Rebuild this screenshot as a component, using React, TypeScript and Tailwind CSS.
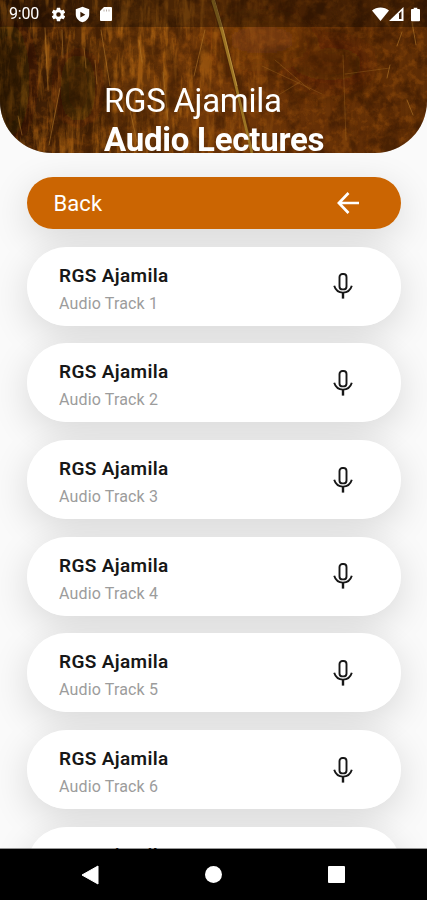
import React from "react";

const tracks = [1, 2, 3, 4, 5, 6, 7];

const WoodTexture: React.FC = () => (
  <svg
    className="absolute inset-0 h-full w-full"
    viewBox="0 0 427 153"
    preserveAspectRatio="none"
    aria-hidden="true"
  >
    <defs>
      <linearGradient id="base" x1="0" y1="0" x2="1" y2="0">
        <stop offset="0" stopColor="#3a1c05" />
        <stop offset="0.12" stopColor="#482306" />
        <stop offset="0.3" stopColor="#663508" />
        <stop offset="0.5" stopColor="#703708" />
        <stop offset="0.75" stopColor="#642f06" />
        <stop offset="1" stopColor="#5c2c05" />
      </linearGradient>
      <linearGradient id="fadeRight" x1="0" y1="0" x2="1" y2="0">
        <stop offset="0.4" stopColor="#fff" />
        <stop offset="0.7" stopColor="#222" />
      </linearGradient>
      <mask id="leftMask">
        <rect width="427" height="153" fill="url(#fadeRight)" />
      </mask>
      <filter id="grain" x="0" y="0" width="100%" height="100%" colorInterpolationFilters="sRGB">
        <feTurbulence type="fractalNoise" baseFrequency="0.16 0.025" numOctaves={5} seed={8} />
        <feColorMatrix values="0 0 0 0 0.7  0 0 0 0 0.41  0 0 0 0 0.08  4 0 0 0 -1.85" />
      </filter>
      <filter id="blotch" x="0" y="0" width="100%" height="100%" colorInterpolationFilters="sRGB">
        <feTurbulence type="fractalNoise" baseFrequency="0.06 0.045" numOctaves={6} seed={21} />
        <feColorMatrix values="0 0 0 0 0.14  0 0 0 0 0.05  0 0 0 0 0  0 4 0 0 -1.8" />
      </filter>
      <filter id="rust" x="0" y="0" width="100%" height="100%" colorInterpolationFilters="sRGB">
        <feTurbulence type="fractalNoise" baseFrequency="0.12 0.13" numOctaves={4} seed={4} />
        <feColorMatrix values="0 0 0 0 0.65  0 0 0 0 0.35  0 0 0 0 0.06  4 0 0 0 -1.85" />
      </filter>
      <filter id="soft">
        <feGaussianBlur stdDeviation="0.6" />
      </filter>
      <filter id="smudge" x="-50%" y="-50%" width="200%" height="200%">
        <feGaussianBlur stdDeviation="12" />
      </filter>
    </defs>
    <rect width="427" height="153" fill="url(#base)" />
    <g mask="url(#leftMask)">
      <rect width="427" height="153" filter="url(#grain)" opacity="0.7" />
    </g>
    <rect width="427" height="153" filter="url(#rust)" opacity="0.35" />
    <rect width="427" height="153" filter="url(#blotch)" opacity="0.4" />
    <g filter="url(#smudge)">
      <ellipse cx="78" cy="88" rx="18" ry="38" fill="#1c0b02" opacity="0.6" />
      <ellipse cx="8" cy="80" rx="22" ry="60" fill="#1c0b02" opacity="0.6" />
      <ellipse cx="330" cy="64" rx="36" ry="16" fill="#3a1803" opacity="0.6" />
      <ellipse cx="262" cy="40" rx="40" ry="14" fill="#8a450d" opacity="0.5" />
    </g>
    <g fill="none" stroke="#b47a2b" strokeLinecap="round" filter="url(#soft)">
      <path d="M45 28L48 90M62 30L63 58M60 88L49 145M101 30L110 86M139 40L142 62M205 30L194 76" opacity="0.55" />
      <path d="M18 116L22 135M84 48L86 68M163 72L168 120M130 110L137 142M95 60L97 84" opacity="0.5" />
      <path d="M262 66L322 94M275 60L310 90M300 82L270 100M345 74L390 68M343 55L346 140" opacity="0.3" />
      <path d="M412 22L416 45M397 46L402 32M390 65L387 78M407 100L413 115" opacity="0.6" />
    </g>
    <path d="M213 0L222 31L237 90L254 153" fill="none" stroke="#4a2405" strokeWidth="5" opacity="0.5" />
    <path d="M212.5 0L222 31L236 86L252 153" fill="none" stroke="#9c7423" strokeWidth="2.8" />
    <path d="M214.5 0L223.5 31L237 86" fill="none" stroke="#c49b48" strokeWidth="0.8" />
  </svg>
);

const StatusBar: React.FC = () => (
  <div className="absolute inset-x-0 top-0 flex h-[27px] items-center bg-black/30 pt-[1px] pr-[7px] pl-[9px] text-white">
    <span className="w-[41px] text-[16px] leading-none tracking-[-0.2px]">9:00</span>
    <svg className="h-[17px] w-[17px]" viewBox="0 0 24 24" fill="currentColor">
      <path d="M19.14 12.94c.04-.3.06-.61.06-.94 0-.32-.02-.64-.07-.94l2.03-1.58c.18-.14.23-.41.12-.61l-1.92-3.32c-.12-.22-.37-.29-.59-.22l-2.39.96c-.5-.38-1.03-.7-1.62-.94l-.36-2.54c-.04-.24-.24-.41-.48-.41h-3.84c-.24 0-.43.17-.47.41l-.36 2.54c-.59.24-1.13.57-1.62.94l-2.39-.96c-.22-.08-.47 0-.59.22L2.74 8.87c-.12.21-.08.47.12.61l2.03 1.58c-.05.3-.09.63-.09.94s.02.64.07.94l-2.03 1.58c-.18.14-.23.41-.12.61l1.92 3.32c.12.22.37.29.59.22l2.39-.96c.5.38 1.03.7 1.62.94l.36 2.54c.05.24.24.41.48.41h3.84c.24 0 .44-.17.47-.41l.36-2.54c.59-.24 1.13-.56 1.62-.94l2.39.96c.22.08.47 0 .59-.22l1.92-3.32c.12-.22.07-.47-.12-.61l-2.01-1.58zM12 15.2A3.2 3.2 0 1 1 12 8.8a3.2 3.2 0 0 1 0 6.4z" />
    </svg>
    <svg className="ml-[7px] h-[17px] w-[17px]" viewBox="0 0 24 24" fill="currentColor">
      <path fillRule="evenodd" d="M12 1L2.5 4.5v7c0 5.3 4 9.8 9.5 11.5 5.5-1.7 9.5-6.2 9.5-11.5v-7L12 1zM9 8l7 4.2-7 4.2V8z" />
    </svg>
    <svg className="ml-[8px] h-[16px] w-[14px]" viewBox="0 0 14 16" fill="currentColor">
      <path d="M5 1h7a1 1 0 0 1 1 1v12a1 1 0 0 1-1 1H2a1 1 0 0 1-1-1V5l4-4z" />
      <path d="M5 3.5v2M7.5 3.5v2M10 3.5v2" stroke="#3b1e08" strokeWidth="0.7" opacity="0.5" />
    </svg>
    <svg className="ml-auto h-[14px] w-[17px]" viewBox="0 0 17 14" fill="currentColor">
      <path d="M8.5 14L0 3.5C4.5-.5 12.5-.5 17 3.5L8.5 14z" />
    </svg>
    <svg className="h-[14px] w-[15px]" viewBox="0 0 15 14">
      <path d="M0 14L14.5 0v14H0z" fill="currentColor" />
      <path d="M10 6.5l2.5-2.5v8H10z" fill="#3b1e08" />
    </svg>
    <svg className="ml-[7px] h-[15px] w-[9px]" viewBox="0 0 10 15" fill="currentColor">
      <path d="M3 0h4v1.5h2a1 1 0 0 1 1 1V14a1 1 0 0 1-1 1H1a1 1 0 0 1-1-1V2.5a1 1 0 0 1 1-1h2z" />
    </svg>
  </div>
);

const MicIcon: React.FC = () => (
  <svg className="h-[26px] w-[20px]" viewBox="0 0 20 26" fill="none" stroke="#171717">
    <rect x="6.5" y="1" width="7" height="15.4" rx="3" strokeWidth="1.9" />
    <path d="M1.2 12.8C2.4 16.8 5.5 19.6 10 19.6S17.6 16.8 18.8 12.8" strokeWidth="1.9" />
    <path d="M10 19.6v6" strokeWidth="2.4" />
  </svg>
);

// the shadow sits on a pseudo element behind the list, so it never tints a neighbouring card
const TrackCard: React.FC<{ track: number }> = ({ track }) => (
  <button
    type="button"
    className="relative flex h-[79px] w-full shrink-0 items-center justify-between rounded-full bg-white pr-[48px] pl-[32.5px] text-left before:absolute before:inset-0 before:-z-10 before:rounded-full before:shadow-[0_10px_38px_rgba(0,0,0,0.14)]"
  >
    <div className="pt-[7px]">
      <div className="text-[19px] leading-[27px] font-semibold tracking-[0.35px] whitespace-nowrap text-[#171717]">
        RGS Ajamila
      </div>
      <div className="text-[16px] leading-[29px] tracking-[0.15px] whitespace-nowrap text-[#9c9c9c]">
        Audio Track {track}
      </div>
    </div>
    <MicIcon />
  </button>
);

const App: React.FC = () => {
  return (
    <div className="flex h-[900px] w-[427px] flex-col overflow-hidden bg-[#fafafa] font-[Roboto,sans-serif]">
      <header className="relative h-[153px] shrink-0 overflow-hidden rounded-b-[52px]">
        <WoodTexture />
        <StatusBar />
        <h1 className="relative pt-[82px] pl-[104px] text-[33px] leading-[38.5px] whitespace-nowrap text-white">
          <span className="block font-normal tracking-[-0.3px]">RGS Ajamila</span>
          <span className="block font-bold tracking-[-0.25px]">Audio Lectures</span>
        </h1>
      </header>

      <main className="isolate min-h-0 flex-1 overflow-hidden px-[26.5px] pt-[24.4px]">
        <div className="flex flex-col gap-[17.65px]">
          <button
            type="button"
            className="relative flex h-[51.8px] shrink-0 items-center justify-between rounded-full bg-[#cb6502] pr-[42px] pl-[27px] text-white before:absolute before:inset-0 before:-z-10 before:rounded-full before:shadow-[0_10px_38px_rgba(0,0,0,0.14)]"
          >
            <span className="text-[22px] tracking-[0.1px]">Back</span>
            <svg className="h-[22px] w-[22px]" viewBox="0 0 22 22" fill="none" stroke="currentColor" strokeWidth="2.7">
              <path d="M11.5 1L1.9 11l9.6 10M2 11h20" />
            </svg>
          </button>
          {tracks.map((track) => (
            <TrackCard key={track} track={track} />
          ))}
        </div>
      </main>

      <nav className="relative -mt-px flex h-[52px] shrink-0 items-center justify-between border-t border-black/40 bg-black bg-clip-padding pr-[82px] pl-[81px] text-white">
        <svg className="h-[20px] w-[18px]" viewBox="0 0 18 20" fill="currentColor">
          <path d="M17 1v18L1 10z" stroke="currentColor" strokeLinejoin="round" />
        </svg>
        <span className="h-[17px] w-[17px] rounded-full bg-white" />
        <span className="h-[17px] w-[17px] rounded-[1px] bg-white" />
      </nav>
    </div>
  );
};

export default App;
